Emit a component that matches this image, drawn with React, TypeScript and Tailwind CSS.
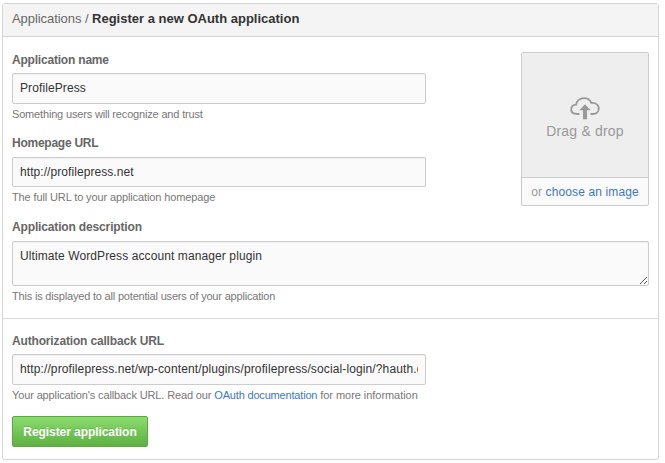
import type { ReactNode } from "react";

function Label({ htmlFor, className = "", children }: { htmlFor: string; className?: string; children: ReactNode }) {
  return (
    <label htmlFor={htmlFor} className={`block h-[14px] whitespace-nowrap text-[12px] leading-[14px] font-bold text-[#666] ${className}`}>
      {children}
    </label>
  );
}

function Note({ className = "", children }: { className?: string; children: ReactNode }) {
  return <p className={`mt-[3px] h-[14px] whitespace-nowrap text-[11px] leading-[14px] text-[#777] ${className}`}>{children}</p>;
}

const field =
  "block rounded-[2px] border border-[#ccc] bg-[#fafafa] px-[7px] text-[12px] text-[#333] shadow-[inset_0_1px_1px_rgba(0,0,0,0.04)] outline-none";

function CloudUpload() {
  return (
    <svg width="30" height="23" viewBox="0 0 30 23" fill="none" className="block">
      <path d="M9.5 17H7C3.6 17 1.2 15.2 1.2 12.3C1.2 9.6 3.2 7.7 6.2 7.6C6.4 3.7 10 1.1 14 1.1C17.4 1.1 20.1 2.8 21.3 5.9C25.6 5.2 28.8 7.9 28.8 11.6C28.8 14.9 26.2 17 22.8 17H20.5" stroke="#999" strokeWidth="1.8" />
      <path d="M15 7.2L20.6 13.2H17V22.2H13V13.2H9.4Z" fill="#999" />
    </svg>
  );
}

export default function App() {
  return (
    <div className="h-[463px] w-[665px] overflow-hidden bg-white pt-[3px] pl-[2px] font-['Liberation_Sans',Arial,sans-serif]">
      <form className="h-[457px] w-[657px] rounded-[3px] border border-[#d5d5d5] bg-white">
        <h1 className="h-[33px] border-b border-[#d5d5d5] bg-[#f4f4f4] pl-[9px] text-[13px] leading-[30px] whitespace-nowrap text-[#666]">
          <span className="tracking-[-0.06px]">Applications / </span>
          <b className="text-[#333]">Register a new OAuth application</b>
        </h1>
        <section className="h-[282px] border-b border-[#ddd] px-[9px] pt-[15px]">
          <div className="flex justify-between">
            <div className="w-[414px]">
              <Label htmlFor="name" className="mt-px tracking-[-0.2px]">Application name</Label>
              <input id="name" className={`${field} mt-[6px] h-[31px] w-full pb-[2px] tracking-[0.1px]`} defaultValue="ProfilePress" />
              <Note className="tracking-[-0.17px]">Something users will recognize and trust</Note>
              <Label htmlFor="home" className="mt-[15px] tracking-[-0.25px]">Homepage URL</Label>
              <input id="home" className={`${field} mt-[7px] h-[30px] w-full tracking-[0.07px]`} defaultValue="http://profilepress.net" />
              <Note className="tracking-[-0.12px]">The full URL to your application homepage</Note>
            </div>
            <div className="h-[154px] w-[128px] rounded-[2px] border border-[#ccc] bg-[#fafafa]">
              <div className="flex h-[125px] flex-col items-center border-b border-[#ccc] bg-[#eee] pt-[44px] text-[#999]">
                <CloudUpload />
                <span className="mt-[3px] text-[14px] leading-[16px] tracking-[0.2px] whitespace-nowrap">Drag &amp; drop</span>
              </div>
              <p className="text-center text-[12px] leading-[28px] tracking-[0.12px] whitespace-nowrap text-[#999]">
                or <a className="text-[#4078c0]">choose an image</a>
              </p>
            </div>
          </div>
          <Label htmlFor="description" className="mt-[14px] tracking-[-0.15px]">Application description</Label>
          <div className="relative mt-[7px]">
            <textarea id="description" className={`${field} h-[45px] w-[637px] resize-none pt-[7px] leading-[15px] tracking-[0.1px]`} defaultValue="Ultimate WordPress account manager plugin" />
            <svg className="absolute right-[2px] bottom-[2px]" width="7" height="7" viewBox="0 0 7 7" stroke="#555" strokeWidth="1" shapeRendering="crispEdges">
              <path d="M0 7L7 0M4 7L7 4" />
            </svg>
          </div>
          <Note className="tracking-[-0.19px]">This is displayed to all potential users of your application</Note>
        </section>
        <section className="px-[9px] pt-[15px]">
          <Label htmlFor="callback" className="tracking-[-0.16px]">Authorization callback URL</Label>
          <input id="callback" className={`${field} mt-[6px] h-[31px] w-[414px] pb-[2px] tracking-[0.12px]`} defaultValue="http://profilepress.net/wp-content/plugins/profilepress/social-login/?hauth.done=Github" />
          <Note>
            <span className="tracking-[-0.13px]">Your application's callback URL. Read our </span>
            <a className="tracking-[-0.18px] text-[#4078c0]">OAuth documentation</a>
            <span className="tracking-[-0.05px]"> for more information</span>
          </Note>
          <button type="button" className="mt-[14px] block h-[31px] w-[136px] rounded-[2px] border border-[#5ca941] bg-linear-to-b from-[#8add6d] to-[#60b044] text-[12px] font-bold tracking-[-0.07px] whitespace-nowrap text-white [text-shadow:0_-1px_0_rgba(0,0,0,0.15)]">
            Register application
          </button>
        </section>
      </form>
    </div>
  );
}
